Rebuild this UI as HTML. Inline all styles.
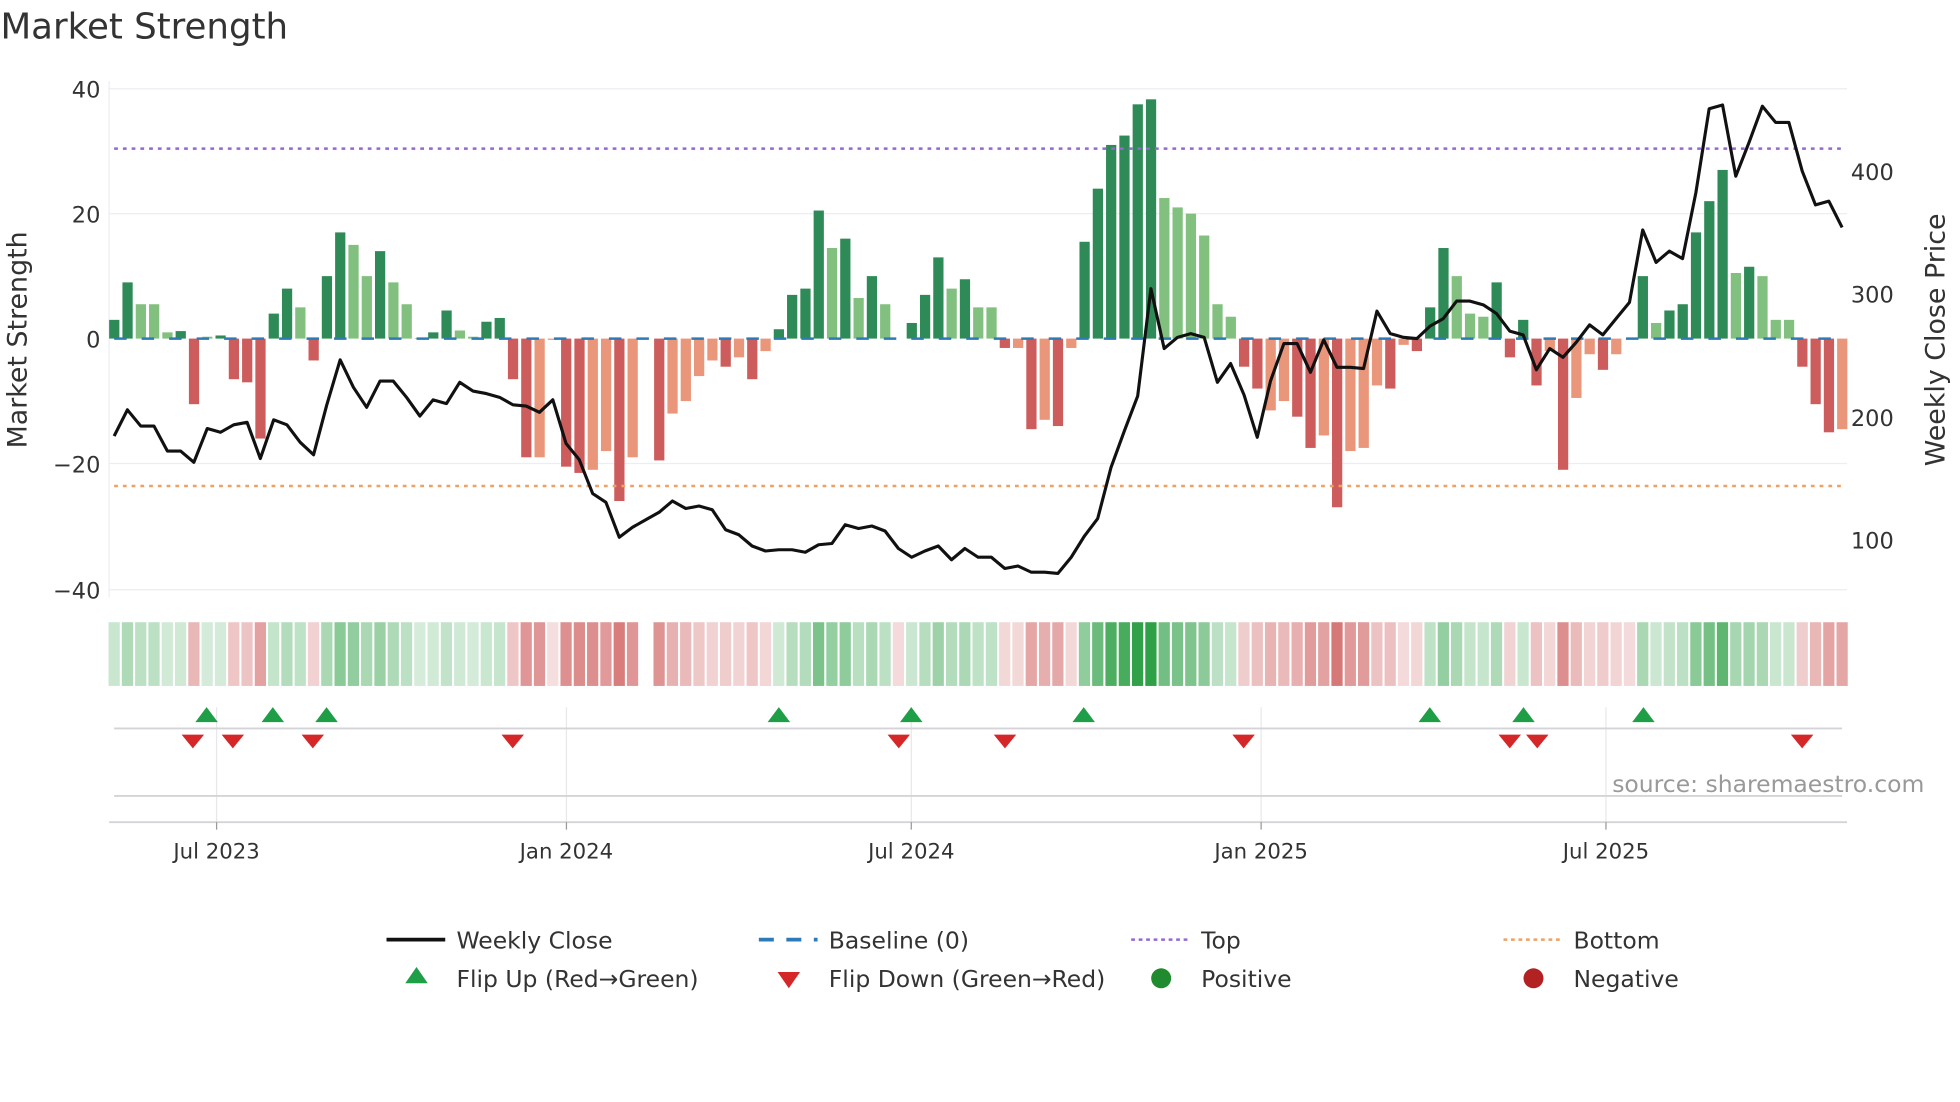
<!DOCTYPE html>
<html><head><meta charset="utf-8">
<style>
html,body{margin:0;padding:0;background:#fff;}
svg{display:block;font-family:"DejaVu Sans","Liberation Sans",sans-serif;}
</style></head>
<body>
<svg id="s" width="1960" height="1102" viewBox="0 0 1568 882" xmlns="http://www.w3.org/2000/svg">
<rect width="1568" height="882" fill="#fff"/>
<text x="0" y="31" font-size="28.5" fill="#333">Market Strength</text>
<g stroke="#eceef4" stroke-width="1">
<line x1="87" y1="71" x2="1478" y2="71"/><line x1="87" y1="171" x2="1478" y2="171"/>
<line x1="87" y1="371" x2="1478" y2="371"/><line x1="87" y1="472" x2="1478" y2="472"/>
<line x1="87" y1="65" x2="87" y2="478"/>
</g>
<g font-size="18" fill="#333" text-anchor="end">
<text x="80" y="78">40</text><text x="80" y="178">20</text><text x="80" y="278">0</text>
<text x="80" y="378">−20</text><text x="80" y="479">−40</text>
</g>
<g font-size="18" fill="#333">
<text x="1481" y="144">400</text><text x="1481" y="242">300</text><text x="1481" y="341">200</text><text x="1481" y="439">100</text>
</g>
<text transform="translate(21,272) rotate(-90)" font-size="21.5" fill="#333" text-anchor="middle">Market Strength</text>
<text transform="translate(1556,272) rotate(-90)" font-size="21.5" fill="#333" text-anchor="middle">Weekly Close Price</text>
<g id="bars"></g>
<g id="strip"></g>
<line x1="91" y1="119" x2="1474" y2="119" stroke="#9467d4" stroke-width="2" stroke-dasharray="3,4"/>
<line x1="91" y1="389" x2="1474" y2="389" stroke="#f0a060" stroke-width="2" stroke-dasharray="3,4"/>
<line x1="91" y1="271" x2="1474" y2="271" stroke="#2d7bb6" stroke-width="2" stroke-dasharray="10,12"/>
<polyline id="price" fill="none" stroke="#111" stroke-width="2.5" stroke-linejoin="round"/>
<g stroke="#e8e8ec" stroke-width="1">
<line x1="173" y1="566" x2="173" y2="658"/><line x1="453" y1="566" x2="453" y2="658"/>
<line x1="729" y1="566" x2="729" y2="658"/><line x1="1009" y1="566" x2="1009" y2="658"/>
<line x1="1285" y1="566" x2="1285" y2="658"/>
</g>
<g stroke="#d4d4d8" stroke-width="1.5">
<line x1="91" y1="583" x2="1474" y2="583"/><line x1="91" y1="637" x2="1474" y2="637"/>
<line x1="87" y1="658" x2="1478" y2="658"/>
</g>
<g stroke="#999" stroke-width="1">
<line x1="173" y1="658" x2="173" y2="664"/><line x1="453" y1="658" x2="453" y2="664"/>
<line x1="729" y1="658" x2="729" y2="664"/><line x1="1009" y1="658" x2="1009" y2="664"/>
<line x1="1285" y1="658" x2="1285" y2="664"/>
</g>
<g id="marks"></g>
<g font-size="17" fill="#333" text-anchor="middle">
<text x="173" y="687">Jul 2023</text><text x="453" y="687">Jan 2024</text><text x="729" y="687">Jul 2024</text>
<text x="1009" y="687">Jan 2025</text><text x="1285" y="687">Jul 2025</text>
</g>
<text x="1290" y="634" font-size="18.8" fill="#999">source: sharemaestro.com</text>
<g font-size="18.8" fill="#333">
<line x1="309" y1="752" x2="356" y2="752" stroke="#111" stroke-width="3"/>
<text x="365" y="759">Weekly Close</text>
<line x1="607" y1="752" x2="654" y2="752" stroke="#2d7bb6" stroke-width="3" stroke-dasharray="12,10"/>
<text x="663" y="759">Baseline (0)</text>
<line x1="905" y1="752" x2="952" y2="752" stroke="#9467d4" stroke-width="2" stroke-dasharray="3,3"/>
<text x="961" y="759">Top</text>
<line x1="1203" y1="752" x2="1250" y2="752" stroke="#f0a060" stroke-width="2" stroke-dasharray="3,3"/>
<text x="1259" y="759">Bottom</text>
<polygon points="333,774 324,787 342,787" fill="#1f9e48"/>
<text x="365" y="790">Flip Up (Red→Green)</text>
<polygon points="622,778 640,778 631,791" fill="#d62728"/>
<text x="663" y="790">Flip Down (Green→Red)</text>
<circle cx="929" cy="783" r="8" fill="#1f8a2e"/>
<text x="961" y="790">Positive</text>
<circle cx="1227" cy="783" r="8" fill="#b22222"/>
<text x="1259" y="790">Negative</text>
</g>
</svg>
<script>
var NS="http://www.w3.org/2000/svg";
function el(t,a,p){var e=document.createElementNS(NS,t);for(var k in a)e.setAttribute(k,a[k]);p.appendChild(e);return e;}
var B=[[3,'d'],[9,'d'],[5.5,'l'],[5.5,'l'],[1,'l'],[1.2,'d'],[-10.5,'r'],[0.3,'l'],[0.5,'d'],[-6.5,'r'],[-7,'r'],[-16,'r'],[4,'d'],[8,'d'],[5,'l'],[-3.5,'r'],[10,'d'],[17,'d'],[15,'l'],[10,'l'],[14,'d'],[9,'l'],[5.5,'l'],[0.1,'l'],[1,'d'],[4.5,'d'],[1.3,'l'],[0.3,'l'],[2.7,'d'],[3.3,'d'],[-6.5,'r'],[-19,'r'],[-19,'s'],[-0.2,'s'],[-20.5,'r'],[-21.5,'r'],[-21,'s'],[-18,'s'],[-26,'r'],[-19,'s'],[0,'x'],[-19.5,'r'],[-12,'s'],[-10,'s'],[-6,'s'],[-3.5,'s'],[-4.5,'r'],[-3,'s'],[-6.5,'r'],[-2,'s'],[1.5,'d'],[7,'d'],[8,'d'],[20.5,'d'],[14.5,'l'],[16,'d'],[6.5,'l'],[10,'d'],[5.5,'l'],[0,'y'],[2.5,'d'],[7,'d'],[13,'d'],[8,'l'],[9.5,'d'],[5,'l'],[5,'l'],[-1.5,'r'],[-1.5,'s'],[-14.5,'r'],[-13,'s'],[-14,'r'],[-1.5,'s'],[15.5,'d'],[24,'d'],[31,'d'],[32.5,'d'],[37.5,'d'],[38.3,'d'],[22.5,'l'],[21,'l'],[20,'l'],[16.5,'l'],[5.5,'l'],[3.5,'l'],[-4.5,'r'],[-8,'r'],[-11.5,'s'],[-10,'s'],[-12.5,'r'],[-17.5,'r'],[-15.5,'s'],[-27,'r'],[-18,'s'],[-17.5,'s'],[-7.5,'s'],[-8,'r'],[-1,'s'],[-2,'r'],[5,'d'],[14.5,'d'],[10,'l'],[4,'l'],[3.5,'l'],[9,'d'],[-3,'r'],[3,'d'],[-7.5,'r'],[-2,'s'],[-21,'r'],[-9.5,'s'],[-2.5,'s'],[-5,'r'],[-2.5,'s'],[0,'y'],[10,'d'],[2.5,'l'],[4.5,'d'],[5.5,'d'],[17,'d'],[22,'d'],[27,'d'],[10.5,'l'],[11.5,'d'],[10,'l'],[3,'l'],[3,'l'],[-4.5,'r'],[-10.5,'r'],[-15,'r'],[-14.5,'s']];
var n=B.length,x0=91,x1=1474,step=(x1-x0)/(n-1);
var col={d:'#2e8b57',l:'#82c07f',r:'#cd5c5c',s:'#e9967a'};
var bg=document.getElementById('bars'),sg=document.getElementById('strip');
B.forEach(function(b,i){
 var cx=x0+i*step,v=b[0];
 if(b[1]!='x'&&b[1]!='y'&&v!=0){var h=Math.abs(v)*5;el('rect',{x:cx-4,y:v>0?271-h:271,width:8.2,height:h,fill:col[b[1]]},bg);}
 if(b[1]=='y'){el('rect',{x:cx-4.5,y:498,width:9,height:51,fill:'rgba(200,70,70,0.2)'},sg);}
 else if(b[1]!='x'){
  var c=v>=0?'rgba(46,160,70,'+(0.2+Math.abs(v)/38*0.8).toFixed(2)+')':'rgba(200,70,70,'+(0.18+Math.abs(v)/27*0.55).toFixed(2)+')';
  el('rect',{x:cx-4.5,y:498,width:9,height:51,fill:c},sg);}
});
var P=[349,328,341,341,361,361,370,343,346,340,338,367,336,340,354,364,324,288,310,326,305,305,318,333,320,323,306,313,315,318,324,325,330,320,355,368,395,402,430,422,416,410,401,407,405,408,424,428,437,441,440,440,442,436,435,420,423,421,425,439,446,441,437,448,439,446,446,455,453,458,458,459,446,429,415,374,345,317,231,279,270,267,270,306,291,316,350,305,275,275,298,272,294,294,295,249,267,270,271,261,255,241,241,244,251,265,268,296,279,286,274,260,268,255,242,184,210,201,207,154,87,84,141,114,85,98,98,137,164,161,182];
var ps=(x1-x0)/(P.length-1),pts=P.map(function(y,i){return (x0+i*ps).toFixed(1)+','+y;}).join(' ');
document.getElementById('price').setAttribute('points',pts);
var mg=document.getElementById('marks');
[165,218,261,623,729,867,1144,1219,1315].forEach(function(x){el('polygon',{points:x+',566 '+(x-9)+',578 '+(x+9)+',578',fill:'#1f9e48'},mg);});
[154,186,250,410,719,804,995,1208,1230,1442].forEach(function(x){el('polygon',{points:(x-9)+',588 '+(x+9)+',588 '+x+',599',fill:'#d62728'},mg);});
</script>
</body></html>
